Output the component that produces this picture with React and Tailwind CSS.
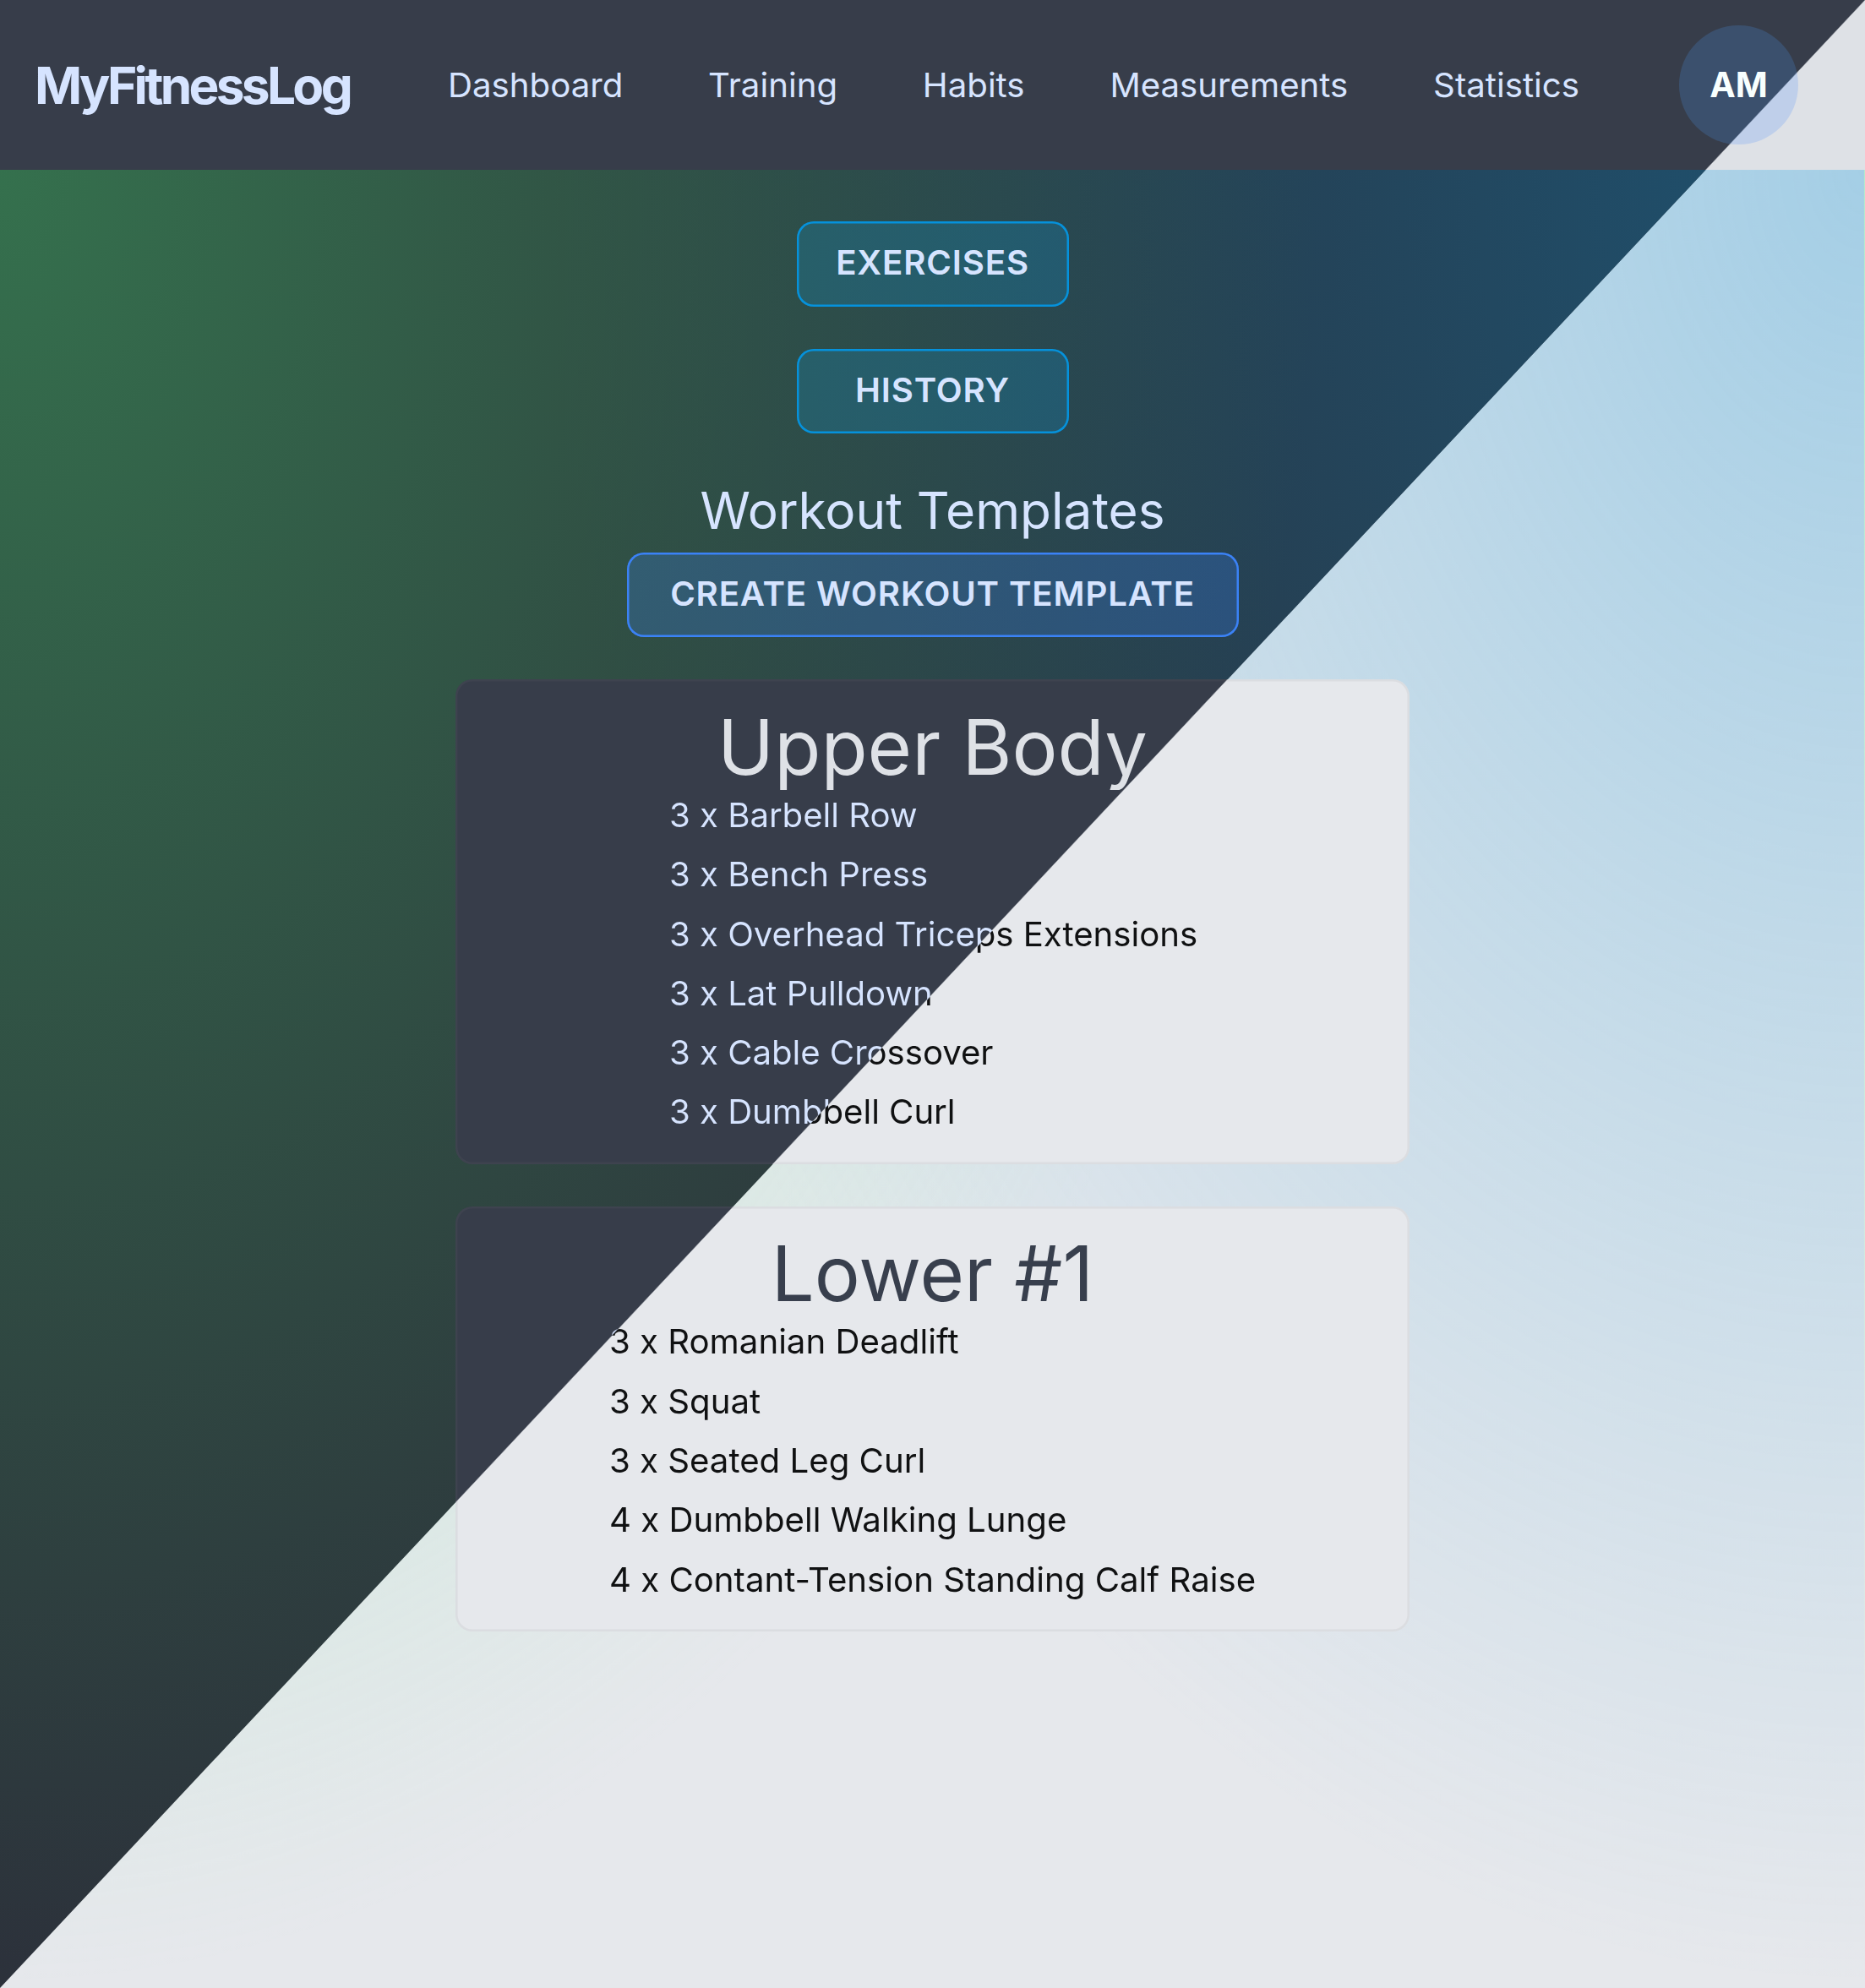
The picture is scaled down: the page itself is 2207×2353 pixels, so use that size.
const NAV_ITEMS = ["Dashboard", "Training", "Habits", "Measurements", "Statistics"];

const TEMPLATES = [
  {
    name: "Upper Body",
    listClass: "pl-[2px] tracking-[-0.05px]",
    exercises: [
      [3, "Barbell Row"],
      [3, "Bench Press"],
      [3, "Overhead Triceps Extensions"],
      [3, "Lat Pulldown"],
      [3, "Cable Crossover"],
      [3, "Dumbbell Curl"],
    ],
  },
  {
    name: "Lower #1",
    listClass: "",
    exercises: [
      [3, "Romanian Deadlift"],
      [3, "Squat"],
      [3, "Seated Leg Curl"],
      [4, "Dumbbell Walking Lunge"],
      [4, "Contant-Tension Standing Calf Raise"],
    ],
  },
];

// Viewport-anchored diagonal fills: dark theme above the diagonal, light theme below it.
const splitSurface =
  "bg-fixed bg-[linear-gradient(to_bottom_right,#373d4a_49.98%,#e6e8ec_50.02%)]";
const splitNav =
  "bg-fixed bg-[linear-gradient(to_bottom_right,#373d4a_49.98%,#dee1e6_50.02%)]";
const splitAvatar =
  "bg-fixed bg-[linear-gradient(to_bottom_right,#3b506d_49.98%,#bfcfea_50.02%)]";
const splitTitle =
  "bg-fixed bg-clip-text text-transparent bg-[linear-gradient(to_bottom_right,#dee1e6_49.98%,#383f4d_50.02%)]";
const splitText =
  "bg-fixed bg-clip-text text-transparent bg-[linear-gradient(to_bottom_right,#d6e4ff_49.98%,#101112_50.02%)]";

function Header() {
  return (
    <header className={`flex h-[201px] items-center pl-[41px] pr-[79px] ${splitNav}`}>
      <span className="w-[456px] pt-[2px] text-[60.3px] font-bold leading-[80px] tracking-[-0.061em]">
        MyFitnessLog
      </span>
      <nav className="flex flex-1 gap-[100.8px] pl-[33px] text-[40.2px] leading-[60px]">
        {NAV_ITEMS.map((item) => (
          <a key={item} href="#">{item}</a>
        ))}
      </nav>
      <div className={`flex size-[141px] items-center justify-center rounded-full pt-[1px] text-[40.8px] font-bold text-[#f8fffe] ${splitAvatar}`}>
        AM
      </div>
    </header>
  );
}

function ActionButton({ children, className }) {
  return (
    <button className={`h-[100.5px] rounded-[20px] pb-[2px] text-[40.2px] font-semibold leading-[60px] tracking-[0.021em] ring-[2.5px] ring-inset ${className}`}>
      {children}
    </button>
  );
}

function TemplateCard({ name, exercises, listClass }) {
  return (
    <article className={`w-[1129px] rounded-[20px] px-[30px] pb-[31px] pt-[30.5px] ring-[2.5px] ring-inset ring-[#808080]/10 ${splitSurface}`}>
      <h3 className={`mx-auto w-fit text-[90.2px] leading-[100px] ${splitTitle}`}>{name}</h3>
      <ul className={`mx-auto flex w-fit flex-col gap-[10px] text-[40.2px] leading-[60.3px] ${listClass}`}>
        {exercises.map(([sets, exercise]) => (
          <li key={exercise} className={splitText}>
            {sets} x {exercise}
          </li>
        ))}
      </ul>
    </article>
  );
}

export default function App() {
  return (
    <div className="relative isolate h-[2353px] w-[2207px] overflow-hidden bg-[#e6e8ec] font-['Inter',sans-serif] text-[#d6e4ff]">
      <div className="absolute inset-x-0 bottom-0 top-[201px] -z-10 bg-[length:2206px_100%] bg-[radial-gradient(1560px_2150px_at_top_left,rgb(134_239_172/0.52),transparent),radial-gradient(1560px_2150px_at_top_right,rgb(66_168_220/0.4),transparent)]" />
      <div className="absolute inset-0 -z-10 bg-[#2c313b] [clip-path:polygon(0_0,100%_0,0_100%)]">
        <div className="mt-[201px] h-[2152px] bg-[radial-gradient(1560px_2150px_at_top_left,rgb(56_136_84/0.73),transparent),radial-gradient(1560px_2150px_at_top_right,rgb(27_88_122/0.83),transparent)]" />
      </div>
      <Header />
      <main className="flex flex-col items-center pt-[61px]">
        <ActionButton className="w-[322px] bg-[#0ea5e9]/20 ring-[#0592dc]">EXERCISES</ActionButton>
        <ActionButton className="mt-[50px] w-[322px] bg-[#0ea5e9]/20 ring-[#0592dc]">HISTORY</ActionButton>
        <h2 className="mt-[52px] text-[60.3px] leading-[80.4px]">Workout Templates</h2>
        <ActionButton className="mt-[8.5px] w-[724px] bg-[#3b82f6]/25 ring-[#3b82f6]">
          CREATE WORKOUT TEMPLATE
        </ActionButton>
        <section className="mt-[50px] flex flex-col gap-[50.3px]">
          {TEMPLATES.map((template) => (
            <TemplateCard key={template.name} {...template} />
          ))}
        </section>
      </main>
    </div>
  );
}
